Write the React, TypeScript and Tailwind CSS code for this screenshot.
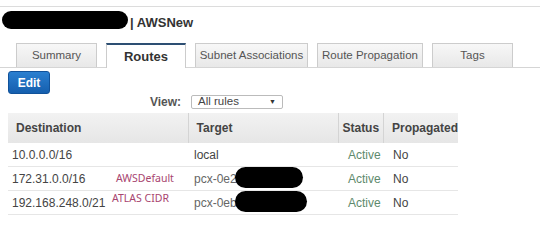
const tabs = [
  { name: "Summary", w: "w-[81px]" },
  { name: "Routes", w: "w-[80px]", active: true },
  { name: "Subnet Associations", w: "w-[113px]" },
  { name: "Route Propagation", w: "w-[106px]" },
  { name: "Tags", w: "w-[81px]" },
];

const routes = [
  { dest: "10.0.0.0/16", note: "", target: "local", hidden: false },
  { dest: "172.31.0.0/16", note: "AWSDefault", target: "pcx-0e2", hidden: true },
  { dest: "192.168.248.0/21", note: "ATLAS CIDR", target: "pcx-0eb", hidden: true },
];

export default function App() {
  return (
    <div className="w-[540px] h-[251px] overflow-hidden bg-white pt-[6px] font-['Liberation_Sans',Arial,sans-serif] text-[#444]">
      <div className="border-t border-[#dcdcdc]" />

      {/* title */}
      <div className="relative h-[36px] flex items-center pl-[130px] pt-[1px]">
        <div className="absolute left-[2px] top-[4px] w-[126px] h-[18px] rounded-full bg-black" />
        <span className="text-[13px] font-bold text-[#333] -mt-[6px]">| AWSNew</span>
      </div>

      {/* tabs */}
      <div className="flex gap-[9px] pl-[16px] h-[25px] border-b border-[#d5d5d5]">
        {tabs.map((t) =>
          t.active ? (
            <div
              key={t.name}
              className={`${t.w} h-[25px] -mb-px flex items-center justify-center whitespace-nowrap bg-white border border-b-0 border-[#ccc] border-t-2 border-t-[#2d4f73] text-[13px] font-bold text-[#333]`}
            >
              {t.name}
            </div>
          ) : (
            <div
              key={t.name}
              className={`${t.w} h-[24px] flex items-center justify-center whitespace-nowrap bg-gradient-to-b from-[#f7f7f7] to-[#e8e8e8] border border-b-0 border-[#ccc] text-[11.5px] text-[#555]`}
            >
              {t.name}
            </div>
          )
        )}
      </div>

      {/* edit */}
      <div className="flex pl-[8px] pt-[3px]">
        <button className="w-[42px] h-[23px] rounded-[3px] bg-gradient-to-b from-[#2a7fd0] to-[#155fae] border border-[#11529a] text-white text-[12px] font-bold">
          Edit
        </button>
      </div>

      {/* view filter */}
      <div className="flex items-center h-[14px] mt-[1px]">
        <span className="w-[181px] text-right text-[12px] font-bold text-[#555]">View:</span>
        <div className="ml-[10px] w-[92px] h-[14px] border border-[#bbb] rounded-[2px] flex items-center justify-between px-[6px] text-[11.5px] text-[#444]">
          <span>All rules</span>
          <span className="text-[7px] text-[#333]">▼</span>
        </div>
      </div>

      {/* table */}
      <div className="ml-[8px] mt-[4px] w-[450px] text-[12px]">
        <div className="flex h-[30px] bg-gradient-to-b from-[#f2f2f2] to-[#e6e6e6] font-bold text-[#444]">
          <div className="w-[182px] flex items-center pl-[8px]">Destination</div>
          <div className="w-[152px] flex items-center pl-[8px] border-l border-[#d4d4d4]">Target</div>
          <div className="w-[46px] flex items-center justify-center border-l border-[#d4d4d4]">Status</div>
          <div className="flex-1 flex items-center pl-[8px] border-l border-[#d4d4d4]">Propagated</div>
        </div>
        {routes.map((r, i) => (
          <div key={r.dest} className="relative flex h-[24px] items-center border-b border-[#e6e6e6]">
            <div className="w-[182px] pl-[4px]">{r.dest}</div>
            <div className={`w-[152px] pl-[4px] ${r.hidden ? "text-[#666]" : ""}`}>{r.target}</div>
            <div className="w-[46px] pl-[6px] text-[#5e8a6c]">Active</div>
            <div className="flex-1 pl-[5px]">No</div>
            {r.note && (
              <span
                className={`absolute text-[10.5px] leading-[16px] text-[#a8456f] font-['Noto_Sans',sans-serif] ${
                  i === 1 ? "left-[108px] top-[3px]" : "left-[104px] top-[-1px]"
                }`}
              >
                {r.note}
              </span>
            )}
            {r.hidden && (
              <div
                className={`absolute top-[0px] h-[21px] rounded-full bg-black ${
                  i === 1 ? "left-[227px] w-[68px]" : "left-[227px] w-[72px]"
                }`}
              />
            )}
          </div>
        ))}
      </div>
    </div>
  );
}
